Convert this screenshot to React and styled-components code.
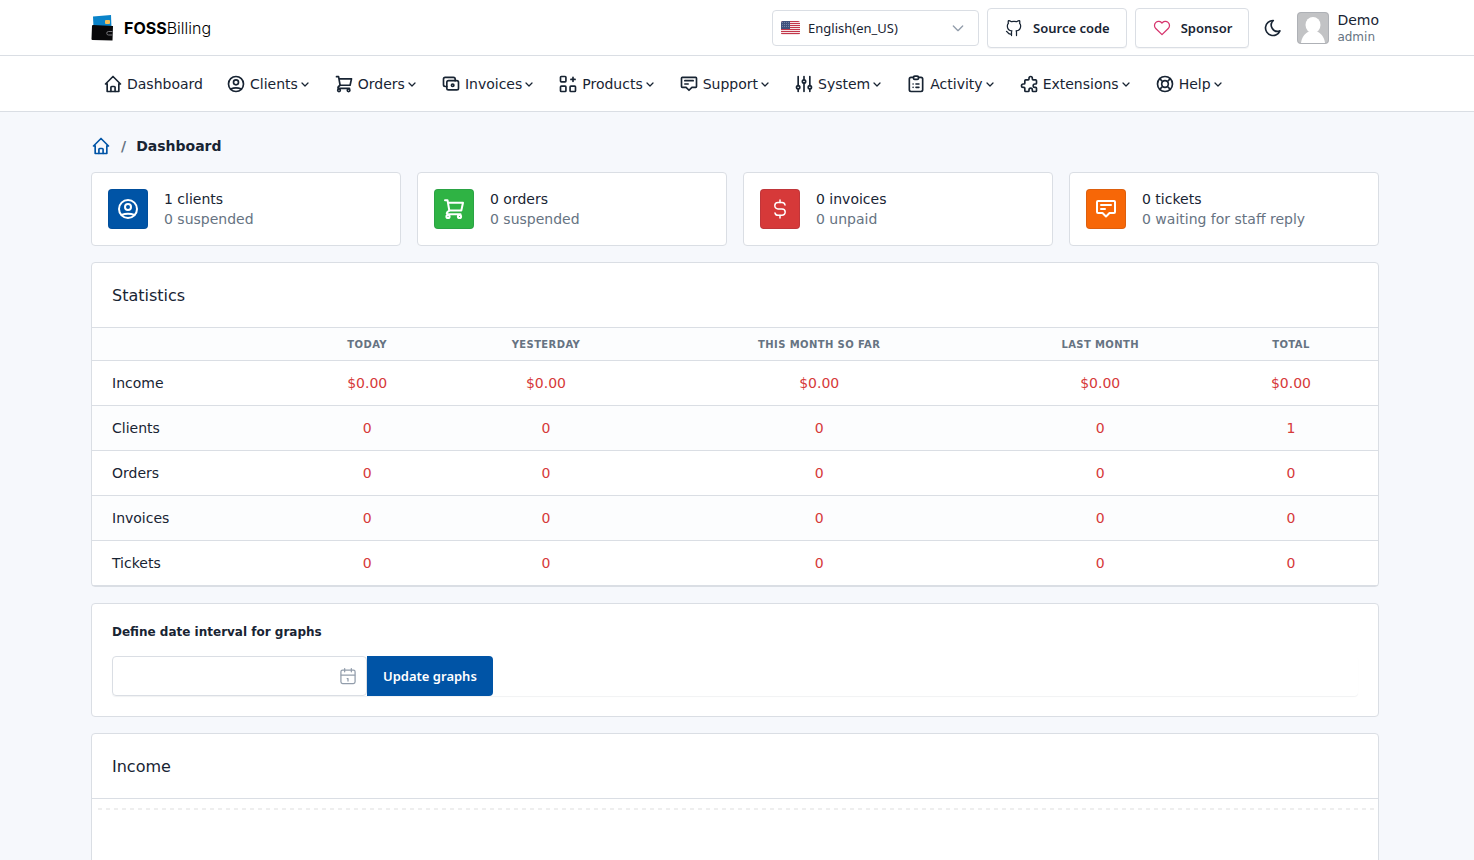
import React from "react";
import styled, { createGlobalStyle } from "styled-components";

const c = {
  text: "#182433",
  muted: "#667382",
  border: "#dadee4",
  page: "#f6f8fc",
  primary: "#0054a6",
  green: "#2fb344",
  red: "#d63939",
  orange: "#f76707",
  pink: "#d6336c",
  icon: "#929dab",
};
const bodyFont = `Verdana, "DejaVu Sans", sans-serif`;
const uiFont = `"Segoe UI", "Noto Sans", sans-serif`;

const GlobalStyle = createGlobalStyle`
  *, *::before, *::after { box-sizing: border-box; }
  body {
    margin: 0;
    background: ${c.page};
    color: ${c.text};
    font: 400 14px/20px ${bodyFont};
  }
  a { color: inherit; text-decoration: none; }
`;

const Container = styled.div`
  max-width: 1324px;
  margin: 0 auto;
  padding: 0 20px 0 16px;
`;

/* Icons */

const Svg = styled.svg.attrs({ viewBox: "0 0 24 24", "aria-hidden": true })`
  display: block;
  flex: none;
  width: ${(p) => p.$size || 20}px;
  height: ${(p) => p.$size || 20}px;
  fill: none;
  stroke: ${(p) => p.$color || "currentColor"};
  stroke-width: ${(p) => p.$weight || 2};
  stroke-linecap: round;
  stroke-linejoin: round;
`;

const glyphs = {
  home: (
    <>
      <path d="M5 12H3l9-9 9 9h-2" />
      <path d="M5 12v9h14v-9" />
      <path d="M9.500 21v-5a1 1 0 0 1 1-1h3a1 1 0 0 1 1 1v5" />
    </>
  ),
  user: (
    <>
      <circle cx="12" cy="12" r="9" />
      <circle cx="12" cy="10" r="3" />
      <path d="M5.500 18q6.500-2.500 13 0" />
    </>
  ),
  cart: (
    <>
      <path d="M3 3.200h2.500L7.300 13.500h12L21 5.800H6" />
      <path d="M7.300 13.500L5.200 15.300Q4 17.200 6 17.200h12.500" />
      <circle cx="6" cy="19.500" r="1.600" />
      <circle cx="17.500" cy="19.500" r="1.600" />
    </>
  ),
  cash: (
    <>
      <rect x="7" y="8" width="14" height="11" rx="2" />
      <circle cx="14" cy="13.500" r="1.500" />
      <path d="M17 8V6a2 2 0 0 0-2-2H5a2 2 0 0 0-2 2v7a2 2 0 0 0 2 2h2" />
    </>
  ),
  apps: (
    <>
      <rect x="3" y="3" width="6.500" height="6.500" rx="1" />
      <rect x="3" y="14.500" width="6.500" height="6.500" rx="1" />
      <rect x="14.500" y="14.500" width="6.500" height="6.500" rx="1" />
      <path d="M15.500 6.500h5M18 4v5" />
    </>
  ),
  message: (
    <>
      <path d="M4 4h16a1 1 0 0 1 1 1v10a1 1 0 0 1-1 1h-4.500L12 19.500 8.500 16H4a1 1 0 0 1-1-1V5a1 1 0 0 1 1-1z" />
      <path d="M7 8h10M7 12h4" />
    </>
  ),
  sliders: (
    <>
      <circle cx="5" cy="16" r="2" />
      <circle cx="12" cy="9" r="2" />
      <circle cx="19" cy="16" r="2" />
      <path d="M5 3v11M5 18v3M12 3v4M12 11v10M19 3v11M19 18v3" />
    </>
  ),
  clipboard: (
    <>
      <path d="M9 4H6a2 2 0 0 0-2 2v13a2 2 0 0 0 2 2h12a2 2 0 0 0 2-2V6a2 2 0 0 0-2-2h-3" />
      <rect x="9" y="2.500" width="6" height="4" rx="1.500" />
      <path d="M8.500 12h.01M12 12h3.500M8.500 16h.01M12 16h3.500" />
    </>
  ),
  puzzle: (
    <path
      transform="matrix(-1 0 0 1 24 0)"
      d="M4 7h3a1 1 0 0 0 1-1V5a2 2 0 0 1 4 0v1a1 1 0 0 0 1 1h3a1 1 0 0 1 1 1v3a1 1 0 0 0 1 1h1a2 2 0 0 1 0 4h-1a1 1 0 0 0-1 1v3a1 1 0 0 1-1 1h-3a1 1 0 0 1-1-1v-1a2 2 0 0 0-4 0v1a1 1 0 0 1-1 1H4a1 1 0 0 1-1-1v-3a1 1 0 0 1 1-1h1a2 2 0 0 0 0-4H4a1 1 0 0 1-1-1V8a1 1 0 0 1 1-1"
    />
  ),
  lifebuoy: (
    <>
      <circle cx="12" cy="12" r="4" />
      <circle cx="12" cy="12" r="9" />
      <path d="M15 15l3.350 3.350M9 15l-3.350 3.350M5.650 5.650L9 9M18.350 5.650L15 9" />
    </>
  ),
  chevron: <path d="M6 10l6 6 6-6" />,
  arrow: <path d="M5 9l7 7 7-7" />,
  github: (
    <path d="M9 19c-4.300 1.400-4.300-2.500-6-3m12 5v-3.500c0-1 .1-1.400-.5-2 2.800-.3 5.500-1.400 5.500-6a4.600 4.600 0 0 0-1.300-3.200 4.200 4.200 0 0 0-.1-3.200s-1.100-.3-3.500 1.300a12.300 12.300 0 0 0-6.200 0C6.500 2.800 5.400 3.100 5.400 3.100a4.200 4.200 0 0 0-.1 3.200A4.600 4.600 0 0 0 4 9.500c0 4.600 2.700 5.700 5.500 6-.6.6-.6 1.200-.5 2V21" />
  ),
  heart: (
    <path d="M19.500 12.572L12 20l-7.500-7.428A5 5 0 1 1 12 6.006a5 5 0 1 1 7.500 6.572" />
  ),
  moon: (
    <path d="M12 3h.393a7.500 7.500 0 0 0 7.920 12.446A9 9 0 1 1 12 2.992z" />
  ),
  dollar: (
    <>
      <path d="M17 8A3 3 0 0 0 14 5.500h-4a3.200 3.200 0 0 0 0 6.400h4a3.200 3.200 0 0 1 0 6.400h-4A3 3 0 0 1 7 16" />
      <path d="M12 3v2.500M12 18.500V21" />
    </>
  ),
  calendar: (
    <>
      <rect x="3.500" y="5" width="17" height="16" rx="2" />
      <path d="M16 3v4M8 3v4M4 11h16M11 15h1M12 15v3" />
    </>
  ),
};

const Icon = ({ name, size, color, weight }) => (
  <Svg $size={size} $color={color} $weight={weight}>
    {glyphs[name]}
  </Svg>
);

/* Top bar */

const TopBar = styled.header`
  background: #fff;
  border-bottom: 1px solid ${c.border};
`;
const TopRow = styled(Container)`
  display: flex;
  align-items: center;
  gap: 8px;
  min-height: 55px;
`;
const Brand = styled.a`
  display: flex;
  align-items: center;
  gap: 9px;
  margin-right: auto;
  color: #000;
  font: 300 16px/24px Inter, sans-serif;

  b { font-weight: 700; }
`;
const LogoSvg = styled.svg`
  width: 24px;
  height: 28px;
`;
const LanguageBox = styled.label`
  position: relative;
  width: 207px;
`;
const LanguageSelect = styled.select`
  appearance: none;
  display: block;
  width: 100%;
  height: 36px;
  padding: 1px 32px 0 35px;
  border: 1px solid ${c.border};
  border-radius: 4px;
  background: #fff;
  color: ${c.text};
  font: 400 13px/20px ${uiFont};
`;
const FlagSvg = styled.svg`
  position: absolute;
  top: 11px;
  left: 9px;
  width: 19px;
  height: 14px;
  border-radius: 2px;
`;
const SelectArrow = styled.span`
  position: absolute;
  top: 10px;
  right: 13px;
  pointer-events: none;
`;
const OutlineButton = styled.button`
  display: flex;
  align-items: center;
  gap: 9px;
  height: 40px;
  padding: 0 16px;
  border: 1px solid ${c.border};
  border-radius: 4px;
  background: #fff;
  box-shadow: 0 1px 0 rgba(24, 36, 51, 0.04);
  color: ${c.text};
  font: 600 13px/20px ${uiFont};
`;
const ThemeButton = styled.button`
  display: flex;
  justify-content: center;
  width: 32px;
  padding: 6px 0;
  border: 0;
  background: none;
  color: ${c.text};
`;
const Account = styled.a`
  display: flex;
  align-items: center;
  gap: 8px;
`;
const AvatarSvg = styled.svg`
  width: 32px;
  height: 32px;
  border-radius: 4px;
`;
const AccountText = styled.span`
  display: flex;
  flex-direction: column;
  line-height: 18px;

  small {
    color: ${c.muted};
    font-size: 12px;
    line-height: 16px;
  }
`;

/* Navigation */

const NavBar = styled.nav`
  background: #fff;
  border-bottom: 1px solid ${c.border};
`;
const NavRow = styled(Container)`
  display: flex;
  align-items: center;
  min-height: 55px;
`;
const NavItem = styled.a`
  display: flex;
  align-items: center;
  padding: 8px 11px 8px 12px;

  span { margin-left: 4px; }
  span + svg { margin-left: 1px; }
`;

/* Page body */

const Main = styled(Container).attrs({ as: "main" })`
  display: flex;
  flex-direction: column;
  gap: 16px;
`;
const Crumbs = styled.div`
  display: flex;
  align-items: center;
  gap: 10px;
  padding-top: 24px;
  color: ${c.muted};

  a { color: ${c.primary}; }
  span { font-weight: 700; }
  strong { color: ${c.text}; }
`;
const Tiles = styled.div`
  display: grid;
  grid-template-columns: repeat(4, 1fr);
  gap: 16px;
`;
const Card = styled.section`
  border: 1px solid ${c.border};
  border-radius: 4px;
  background: #fff;
`;
const Tile = styled(Card)`
  display: flex;
  align-items: center;
  gap: 16px;
  padding: 16px;
`;
const TileIcon = styled.span`
  display: grid;
  place-items: center;
  width: 40px;
  height: 40px;
  border-radius: 4px;
  background: ${(p) => p.$color};
  box-shadow: inset 0 0 0 1px rgba(4, 32, 69, 0.1);
  color: #fff;
`;
const Muted = styled.div`
  color: ${c.muted};
`;
const CardTitle = styled.h2`
  margin: 0;
  padding: 21px 20px 19px;
  border-bottom: 1px solid ${c.border};
  font-size: 16px;
  font-weight: 400;
  line-height: 24px;
`;
const Table = styled.table`
  width: 100%;
  table-layout: fixed;
  border-collapse: separate;
  border-spacing: 0;

  th, td {
    padding: 12px 8px;
    border-bottom: 1px solid ${c.border};
    color: ${c.red};
    font-weight: 400;
    text-align: center;
  }
  tbody th {
    color: ${c.text};
    text-align: left;
  }
  thead th {
    padding: 9px 8px 7px;
    background: #fcfdfe;
    color: ${c.muted};
    font-size: 10px;
    font-weight: 700;
    line-height: 16px;
    letter-spacing: 0.04em;
    text-transform: uppercase;
  }
  tr > :first-child { padding-left: 20px; }
  tr > :last-child { padding-right: 20px; }
  tbody tr:nth-child(even) { background: #fcfdfe; }
`;
const Col = styled.col`
  width: ${(p) => p.$share}%;
`;
const FormCard = styled(Card).attrs({ as: "form" })`
  padding: 20px;
`;
const FieldLabel = styled.label`
  display: block;
  margin-bottom: 16px;
  font-size: 12px;
  font-weight: 700;
  line-height: 16px;
`;
const FieldGroup = styled.div`
  display: flex;
  border-radius: 4px;
  box-shadow: 0 1px 1px rgba(24, 36, 51, 0.06);
`;
const DateField = styled.div`
  position: relative;
  width: 255px;

  svg {
    position: absolute;
    top: 10px;
    right: 9px;
  }
`;
const DateInput = styled.input`
  display: block;
  width: 100%;
  height: 40px;
  padding: 0 36px 0 12px;
  border: 1px solid ${c.border};
  border-radius: 4px;
  background: #fff;
  font: inherit;
`;
const PrimaryButton = styled.button`
  padding: 0 16px;
  border: 0;
  border-radius: 0 4px 4px 0;
  background: ${c.primary};
  color: #fff;
  font: 600 13px/20px ${uiFont};
`;
const ChartSvg = styled.svg`
  display: block;
  width: 100%;
  height: 240px;
  padding: 0 4px 0 6px;
`;

const Logo = () => (
  <LogoSvg viewBox="0 0 24 28" aria-hidden="true">
    <path d="M2 2.500L20 1l.5 13H2.500z" fill="#0a83c9" />
    <rect x="14" y="6" width="5" height="4" rx="1" fill="#f4bf5a" />
    <path d="M2 11l20 1-.5 14.500L1.500 26a1 1 0 0 1-1-1L1 12a1 1 0 0 1 1-1z" fill="#08080a" />
    <path d="M21.500 17.500h-4a1.700 1.700 0 0 0 0 3.500h4" fill="none" stroke="#77777c" />
  </LogoSvg>
);

const Flag = () => (
  <FlagSvg viewBox="0 0 19 14" aria-hidden="true">
    <rect width="19" height="14" fill="#f6e3e5" />
    {[0, 2, 4, 6, 8, 10, 12].map((y) => (
      <rect key={y} y={y} width="19" height="1" fill="#c2364a" />
    ))}
    <rect width="9" height="8" fill="#3f4f7c" />
    <path d="M1 1.500h8M1 3.500h8M1 5.500h8" stroke="#7482a4" strokeDasharray="1 1" />
  </FlagSvg>
);

const Avatar = () => (
  <AvatarSvg viewBox="0 0 32 32" aria-hidden="true">
    <rect width="32" height="32" fill="#c2c3c5" />
    <ellipse cx="16" cy="13" rx="7.500" ry="8" fill="#fff" />
    <path d="M4 31c1-8 6-11 9-12h6c3 1 8 4 9 12z" fill="#fff" />
    <rect x=".5" y=".5" width="31" height="31" rx="3.500" fill="none" stroke="#aeb1b6" />
  </AvatarSvg>
);

const nav = [
  ["Dashboard", "home"],
  ["Clients", "user"],
  ["Orders", "cart"],
  ["Invoices", "cash"],
  ["Products", "apps"],
  ["Support", "message"],
  ["System", "sliders"],
  ["Activity", "clipboard"],
  ["Extensions", "puzzle"],
  ["Help", "lifebuoy"],
];
const tiles = [
  ["user", c.primary, "1 clients", "0 suspended"],
  ["cart", c.green, "0 orders", "0 suspended"],
  ["dollar", c.red, "0 invoices", "0 unpaid"],
  ["message", c.orange, "0 tickets", "0 waiting for staff reply"],
];
const columns = [
  ["", 15.9],
  ["Today", 11],
  ["Yesterday", 16.8],
  ["This month so far", 25.7],
  ["Last month", 18],
  ["Total", 12.6],
];
const rows = [
  ["Income", "$0.00", "$0.00", "$0.00", "$0.00", "$0.00"],
  ["Clients", "0", "0", "0", "0", "1"],
  ["Orders", "0", "0", "0", "0", "0"],
  ["Invoices", "0", "0", "0", "0", "0"],
  ["Tickets", "0", "0", "0", "0", "0"],
];

export default function App() {
  return (
    <>
      <GlobalStyle />
      <TopBar>
        <TopRow>
          <Brand href="#">
            <Logo />
            <span><b>FOSS</b>Billing</span>
          </Brand>
          <LanguageBox>
            <LanguageSelect aria-label="Language">
              <option>English(en_US)</option>
            </LanguageSelect>
            <Flag />
            <SelectArrow>
              <Icon name="arrow" size={16} color={c.icon} />
            </SelectArrow>
          </LanguageBox>
          <OutlineButton type="button">
            <Icon name="github" weight={1.5} />
            Source code
          </OutlineButton>
          <OutlineButton type="button">
            <Icon name="heart" weight={1.5} color={c.pink} />
            Sponsor
          </OutlineButton>
          <ThemeButton type="button" aria-label="Enable dark mode">
            <Icon name="moon" />
          </ThemeButton>
          <Account href="#">
            <Avatar />
            <AccountText>
              Demo
              <small>admin</small>
            </AccountText>
          </Account>
        </TopRow>
      </TopBar>
      <NavBar>
        <NavRow>
          {nav.map(([label, icon], i) => (
            <NavItem href="#" key={label}>
              <Icon name={icon} />
              <span>{label}</span>
              {i > 0 && <Icon name="chevron" size={12} weight={2.5} />}
            </NavItem>
          ))}
        </NavRow>
      </NavBar>
      <Main>
        <Crumbs>
          <a href="#" aria-label="Home"><Icon name="home" /></a>
          <span>/</span>
          <strong>Dashboard</strong>
        </Crumbs>
        <Tiles>
          {tiles.map(([icon, color, title, note]) => (
            <Tile key={icon}>
              <TileIcon $color={color}>
                <Icon name={icon} size={24} weight={icon === "dollar" ? 1.5 : 2} />
              </TileIcon>
              <div>
                <div>{title}</div>
                <Muted>{note}</Muted>
              </div>
            </Tile>
          ))}
        </Tiles>
        <Card>
          <CardTitle>Statistics</CardTitle>
          <Table>
            <colgroup>
              {columns.map(([name, share]) => <Col key={name} $share={share} />)}
            </colgroup>
            <thead>
              <tr>{columns.map(([name]) => <th key={name} scope="col">{name}</th>)}</tr>
            </thead>
            <tbody>
              {rows.map(([name, ...values]) => (
                <tr key={name}>
                  <th scope="row">{name}</th>
                  {values.map((v, i) => <td key={i}>{v}</td>)}
                </tr>
              ))}
            </tbody>
          </Table>
        </Card>
        <FormCard>
          <FieldLabel htmlFor="interval">Define date interval for graphs</FieldLabel>
          <FieldGroup>
            <DateField>
              <DateInput id="interval" type="text" />
              <Icon name="calendar" weight={1.5} color={c.icon} />
            </DateField>
            <PrimaryButton type="button">Update graphs</PrimaryButton>
          </FieldGroup>
        </FormCard>
        <Card>
          <CardTitle>Income</CardTitle>
          <ChartSvg role="img" aria-label="Income chart">
            <line x1="0" x2="100%" y1="10" y2="10" stroke="#eee" strokeWidth="2" strokeDasharray="4 4" />
          </ChartSvg>
        </Card>
      </Main>
    </>
  );
}
